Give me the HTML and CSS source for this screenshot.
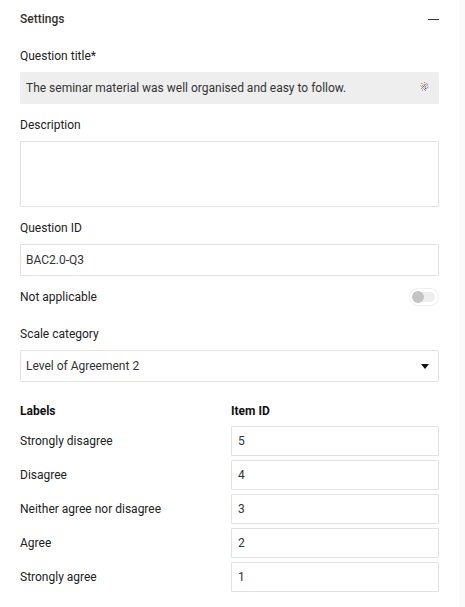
FILE: index.html
```html
<!DOCTYPE html>
<html>
<head>
<meta charset="utf-8">
<link rel="stylesheet" href="styles.css">
</head>
<body>
<div class="page">
  <main class="panel">
    <header class="panel-head">
      <span class="panel-title">Settings</span>
      <span class="collapse"></span>
    </header>

    <section class="field">
      <label class="field-label">Question title*</label>
      <div class="input input-filled">
        <span>The seminar material was well organised and easy to follow.</span>
        <svg class="spark" width="9" height="9" viewBox="0 0 9 9">
          <rect x="1" y="1" width="1" height="1" fill="#6fa8dc"/>
          <rect x="4" y="0" width="1" height="1" fill="#8e7cc3"/>
          <rect x="6" y="1" width="1" height="1" fill="#e06666"/>
          <rect x="2" y="1" width="1" height="1" fill="#f1c232"/>
          <rect x="3" y="2" width="2" height="1" fill="#f6b26b"/>
          <rect x="5" y="2" width="1" height="1" fill="#6d9eeb"/>
          <rect x="7" y="2" width="1" height="1" fill="#c27ba0"/>
          <rect x="0" y="3" width="1" height="1" fill="#f9a825"/>
          <rect x="2" y="3" width="1" height="1" fill="#c27ba0"/>
          <rect x="4" y="3" width="1" height="1" fill="#3d85c6"/>
          <rect x="6" y="3" width="2" height="1" fill="#9fc5e8"/>
          <rect x="1" y="4" width="1" height="1" fill="#e69138"/>
          <rect x="3" y="4" width="1" height="1" fill="#674ea7"/>
          <rect x="5" y="4" width="1" height="1" fill="#3d85c6"/>
          <rect x="8" y="4" width="1" height="1" fill="#a4c2f4"/>
          <rect x="2" y="5" width="1" height="1" fill="#e06666"/>
          <rect x="4" y="5" width="2" height="1" fill="#f6b26b"/>
          <rect x="7" y="5" width="1" height="1" fill="#8e7cc3"/>
          <rect x="1" y="6" width="1" height="1" fill="#6fa8dc"/>
          <rect x="3" y="6" width="1" height="1" fill="#ea9999"/>
          <rect x="5" y="6" width="1" height="1" fill="#674ea7"/>
          <rect x="6" y="6" width="1" height="1" fill="#e69138"/>
          <rect x="2" y="7" width="1" height="1" fill="#f1c232"/>
          <rect x="4" y="7" width="1" height="1" fill="#3d85c6"/>
          <rect x="2" y="8" width="1" height="1" fill="#b4a7d6"/>
          <rect x="5" y="8" width="1" height="1" fill="#6d9eeb"/>
        </svg>
      </div>
    </section>

    <section class="field">
      <label class="field-label">Description</label>
      <div class="input textarea"></div>
    </section>

    <section class="field">
      <label class="field-label">Question ID</label>
      <div class="input"><span>BAC2.0-Q3</span></div>
    </section>

    <section class="toggle-row">
      <span class="field-label-inline">Not applicable</span>
      <span class="switch"><span class="knob"></span></span>
    </section>

    <section class="field">
      <label class="field-label">Scale category</label>
      <div class="input select">
        <span>Level of Agreement 2</span>
        <span class="caret"></span>
      </div>
    </section>

    <section class="scale">
      <div class="scale-head">Labels</div>
      <div class="scale-head">Item ID</div>

      <div class="scale-label">Strongly disagree</div>
      <div class="input small"><span>5</span></div>

      <div class="scale-label">Disagree</div>
      <div class="input small"><span>4</span></div>

      <div class="scale-label">Neither agree nor disagree</div>
      <div class="input small"><span>3</span></div>

      <div class="scale-label">Agree</div>
      <div class="input small"><span>2</span></div>

      <div class="scale-label">Strongly agree</div>
      <div class="input small"><span>1</span></div>
    </section>
  </main>
  <div class="scroll-track"></div>
</div>
</body>
</html>
```

FILE: styles.css
```css
* { box-sizing: border-box; }

html, body {
  margin: 0;
  padding: 0;
  background: #ffffff;
}

body {
  font-family: Roboto, "Liberation Sans", Arial, sans-serif;
  font-size: 12px;
  color: #222222;
}

.page {
  display: flex;
  min-height: 607px;
}

.panel {
  flex: 1;
  padding: 11px 20px 20px 20px;
}

.scroll-track {
  width: 6px;
  background: #fafafa;
}

.panel-head {
  display: flex;
  align-items: center;
  justify-content: space-between;
  height: 16px;
  margin-bottom: 21px;
}

.panel-title {
  font-weight: 500;
  font-size: 12px;
  color: #333333;
  line-height: 16px;
}

.collapse {
  width: 11px;
  height: 1px;
  background: #333333;
}

.field {
  display: flex;
  flex-direction: column;
  margin-bottom: 13px;
}

.field-label {
  line-height: 16px;
  margin-bottom: 8px;
  color: #222222;
}

.input {
  display: flex;
  align-items: center;
  height: 32px;
  border: 1px solid #e2e2e2;
  border-radius: 1px;
  padding: 0 5px;
  color: #333333;
  background: #ffffff;
}

.input-filled {
  background: #eeeeee;
  border-color: #eeeeee;
  justify-content: space-between;
  padding-right: 9px;
}

.spark {
  display: block;
  margin-top: -4px;
}

.textarea {
  height: 66px;
}

.toggle-row {
  display: flex;
  align-items: center;
  justify-content: space-between;
  height: 18px;
  margin-top: -1px;
  margin-bottom: 20px;
}

.field-label-inline {
  line-height: 16px;
}

.switch {
  position: relative;
  width: 30px;
  height: 18px;
  border-radius: 9px;
  border: 1px solid #eeeeee;
  background: #ffffff;
  display: flex;
  align-items: center;
  padding: 0 2px;
}

.switch::before {
  content: "";
  position: absolute;
  left: 3px;
  right: 3px;
  top: 3px;
  bottom: 3px;
  border-radius: 6px;
  background: #eeeeee;
}

.knob {
  position: relative;
  width: 12px;
  height: 12px;
  border-radius: 50%;
  background: #c4c4c4;
}

.select {
  justify-content: space-between;
  padding-right: 9px;
}

.caret {
  width: 0;
  height: 0;
  border-left: 4px solid transparent;
  border-right: 4px solid transparent;
  border-top: 5px solid #111111;
  margin-top: 1px;
}

.scale {
  display: grid;
  grid-template-columns: 211px 1fr;
  row-gap: 4px;
  margin-top: 21px;
}

.scale-head {
  font-weight: 700;
  line-height: 16px;
  margin-bottom: 3px;
  color: #111111;
}

.scale-label {
  display: flex;
  align-items: center;
  height: 30px;
}

.input.small {
  height: 30px;
  padding-left: 6px;
}
```
